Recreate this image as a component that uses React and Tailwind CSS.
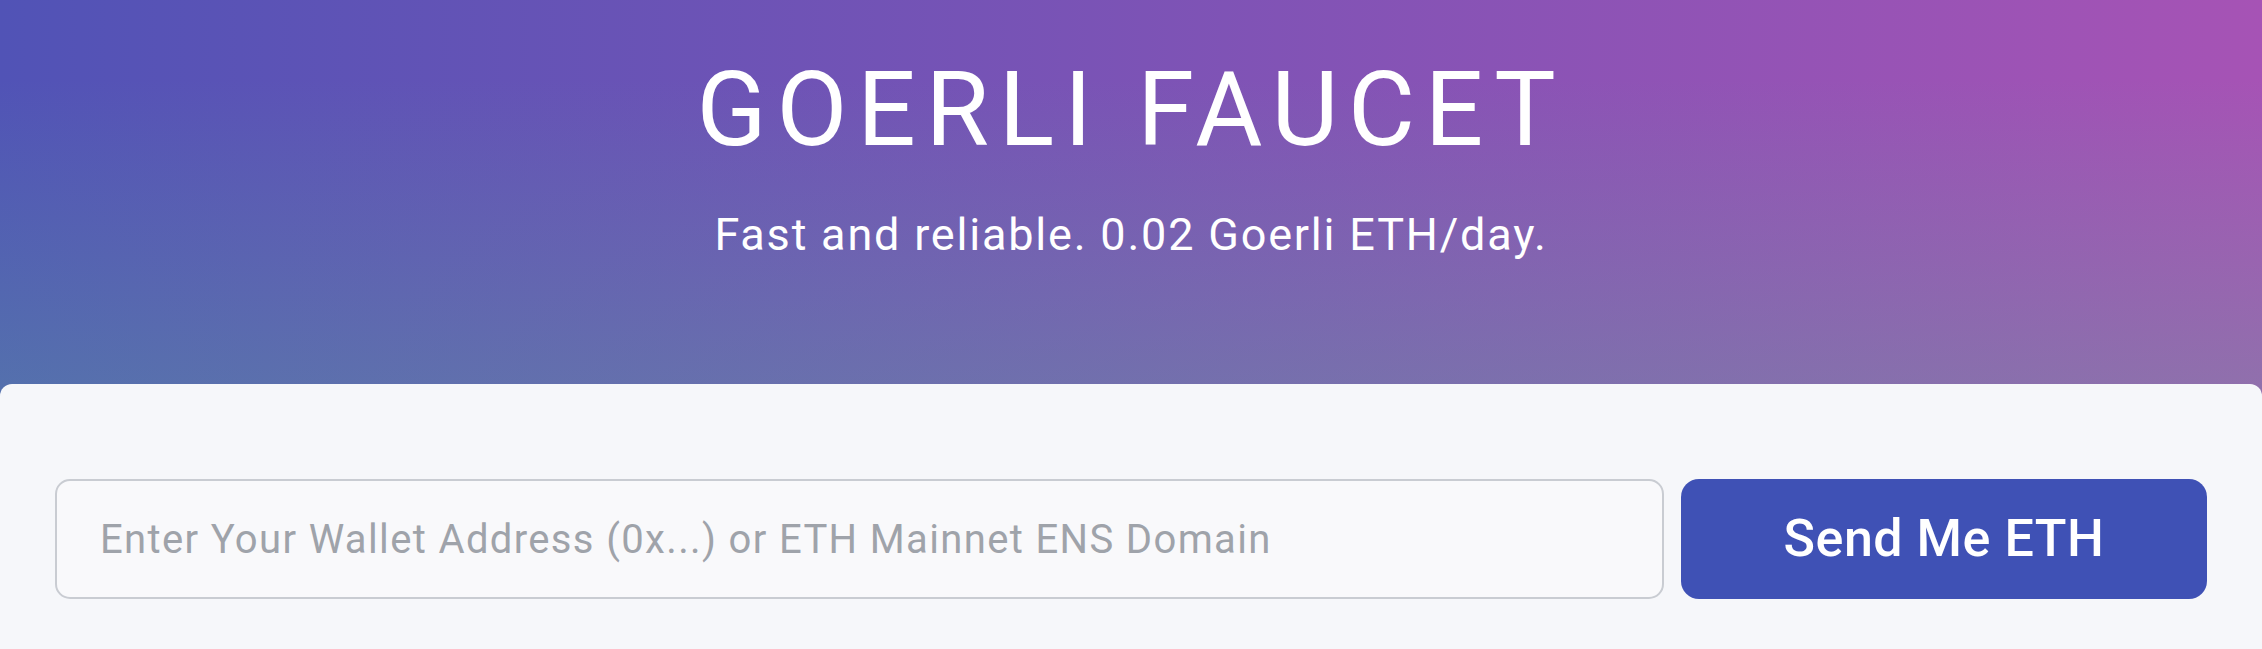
import React, { useState } from "react";

const App = () => {
  const [address, setAddress] = useState("");

  return (
    <div className="min-h-screen bg-[#f6f7fa] font-['Roboto','Liberation_Sans',sans-serif]">
      {/* Header */}
      <div className="h-[396px] bg-[linear-gradient(to_bottom,rgba(91,182,152,0)_20%,rgba(91,182,152,0.3)),linear-gradient(to_right,#5153b6,#a653b5)] pt-[58px] text-center text-white">
        <h1 className="text-[103px] leading-none font-normal tracking-[0.095em]">
          GOERLI FAUCET
        </h1>
        <p className="mt-[51px] text-[45px] leading-none tracking-[0.04em]">
          Fast and reliable. 0.02 Goerli ETH/day.
        </p>
      </div>

      {/* Form card */}
      <div className="-mt-[12px] rounded-t-[12px] bg-[#f6f7fa] px-[55px] pt-[95px] pb-[50px]">
        <div className="flex gap-[17px]">
          <input
            type="text"
            value={address}
            onChange={(e) => setAddress(e.target.value)}
            placeholder="Enter Your Wallet Address (0x...) or ETH Mainnet ENS Domain"
            className="h-[120px] flex-1 rounded-[15px] border-2 border-[#c9ccd2] bg-[#f9f9fb] pl-[43px] text-[40px] tracking-[0.034em] text-gray-700 placeholder:text-[#9fa3aa] focus:outline-none"
          />
          <button className="h-[120px] w-[526px] rounded-[18px] bg-[#3f51b5] text-[52px] font-medium tracking-[0.01em] text-white">
            Send Me ETH
          </button>
        </div>
      </div>
    </div>
  );
};

export default App;
